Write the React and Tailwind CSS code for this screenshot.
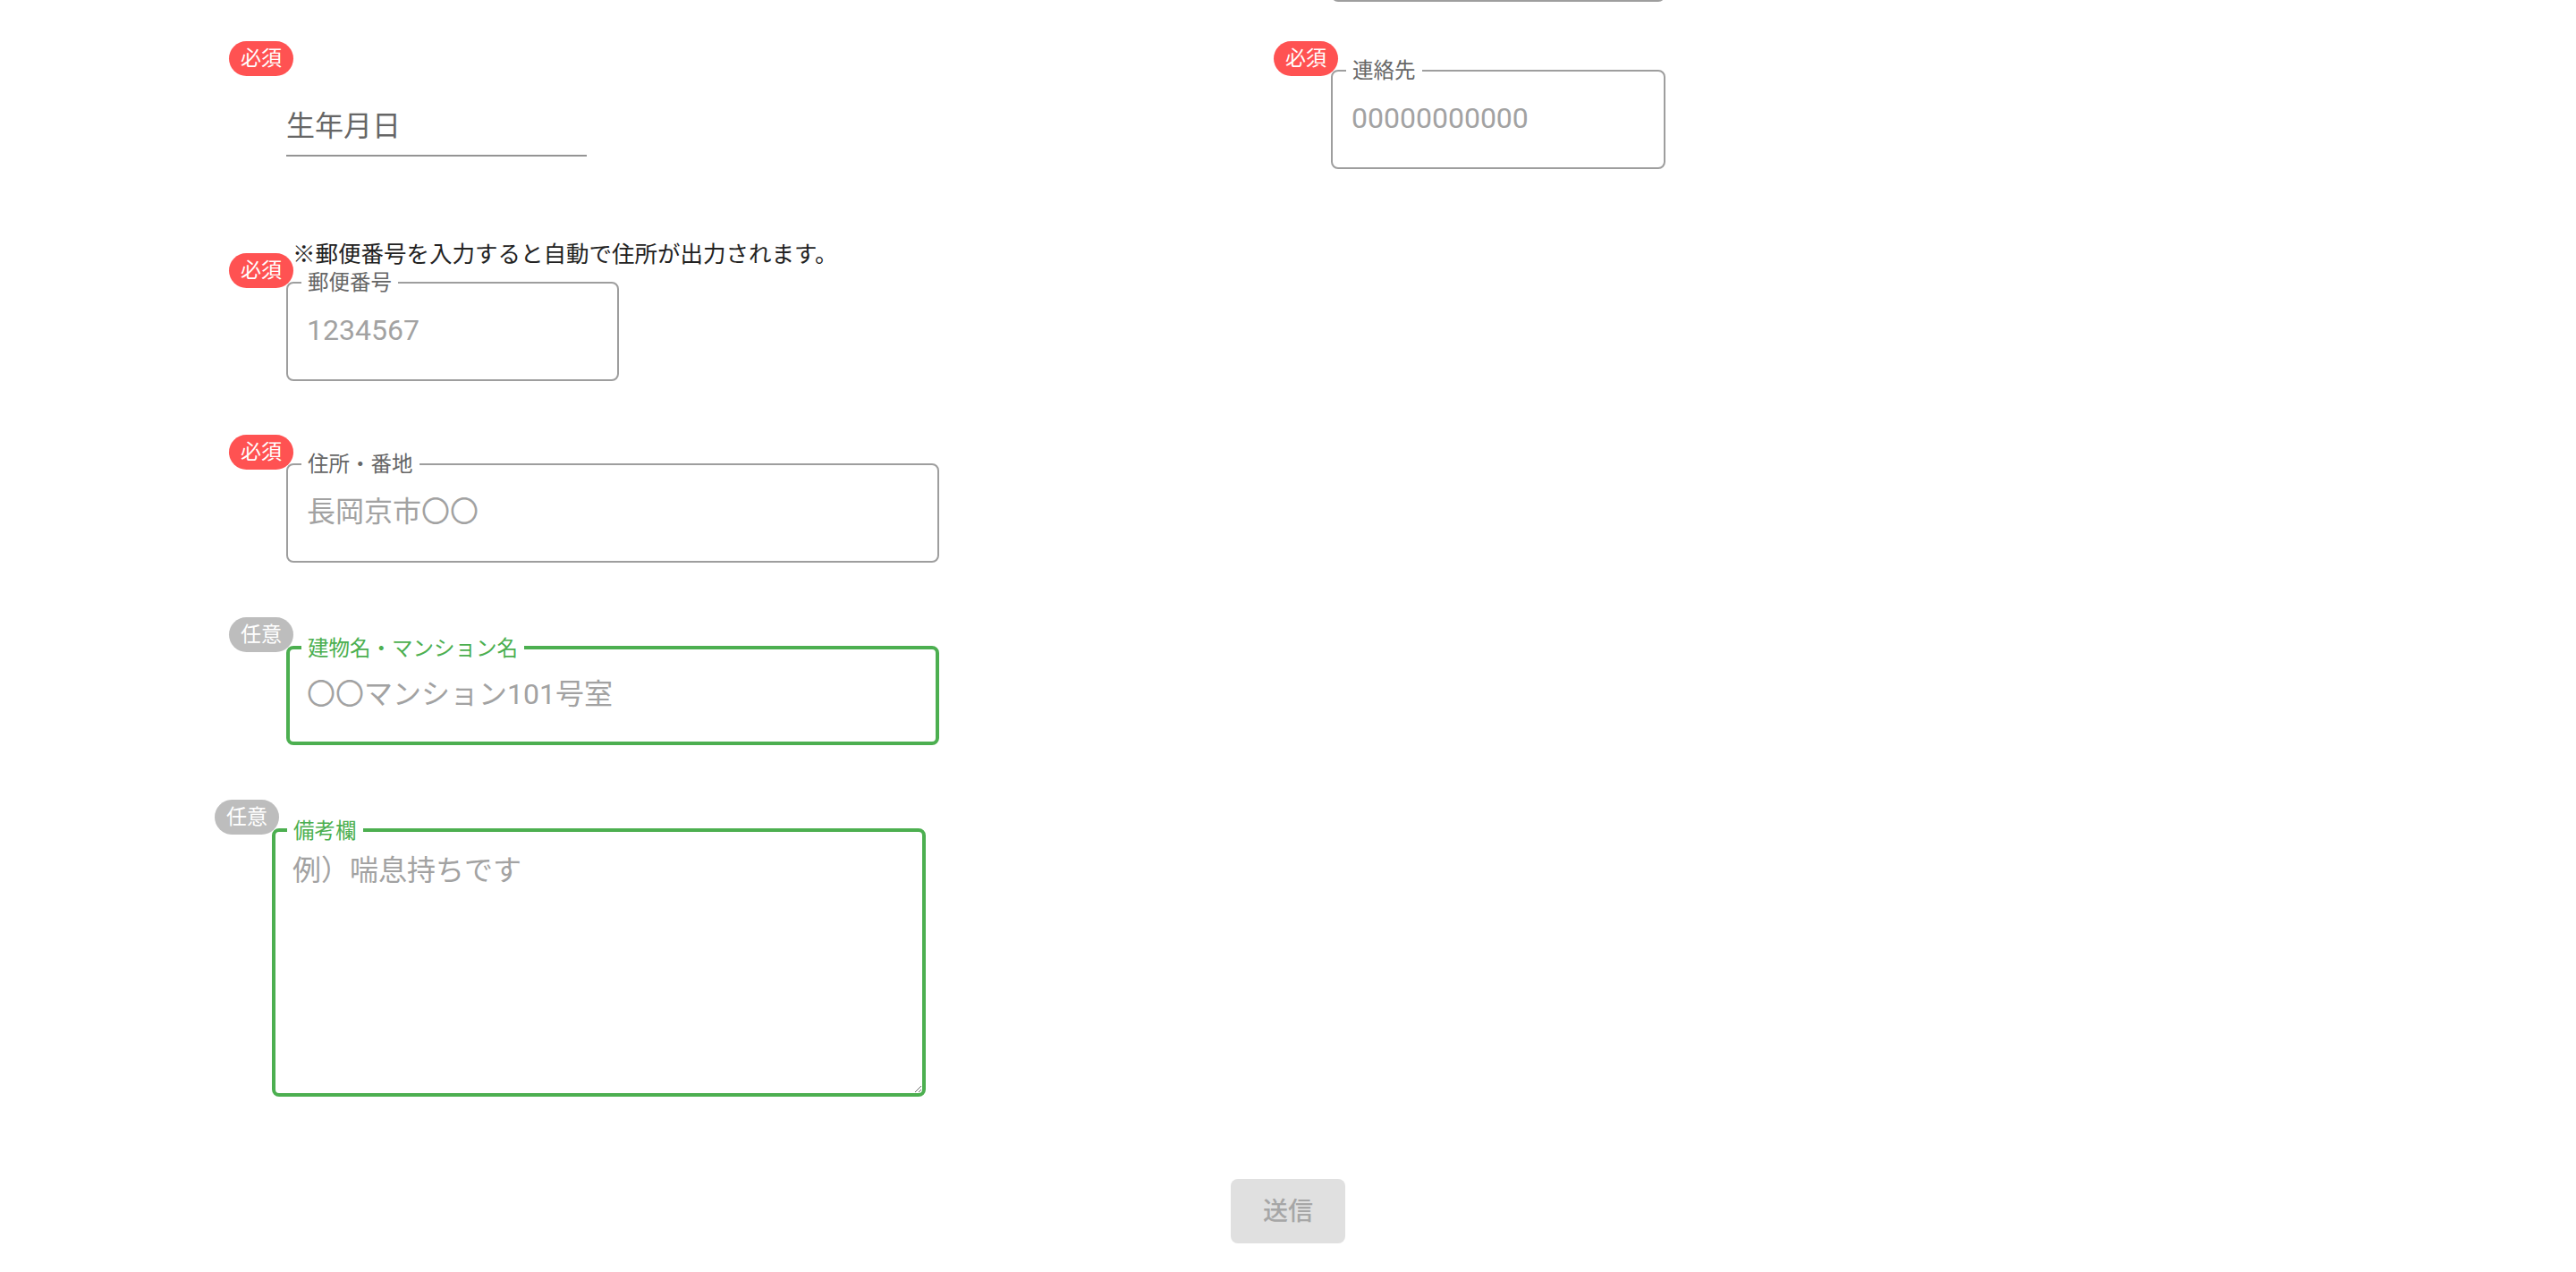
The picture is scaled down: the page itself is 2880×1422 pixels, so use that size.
import React from 'react';

function Badge({ required }) {
  return (
    <span
      className={`absolute -left-[64px] -top-[32px] flex h-[39px] w-[72px] items-center justify-center rounded-full text-[23px] leading-none text-white ${
        required ? 'bg-[#ff5252]' : 'bg-[#bdbdbd]'
      }`}
    >
      {required ? '必須' : '任意'}
    </span>
  );
}

function OutlinedField({ label, placeholder, width, green, required }) {
  return (
    <div className={`relative ${width}`}>
      <Badge required={required} />
      <input
        placeholder={placeholder}
        className={`block h-[111px] w-full rounded-[8px] bg-white pb-[3px] text-[32px] leading-[46px] text-[#212121] outline-none placeholder:text-[#a2a2a2] ${
          green ? 'border-4 border-[#4caf50] pl-[19px]' : 'border-2 border-[#9e9e9e] pl-[21px]'
        }`}
      />
      <span
        className={`absolute left-[17px] bg-white px-[7px] text-[23.5px] leading-[24px] ${
          green ? '-top-[9px] text-[#4caf50]' : '-top-[11px] text-[#666666]'
        }`}
      >
        {label}
      </span>
    </div>
  );
}

function DateField() {
  return (
    <div className="relative h-[97px] w-[336px] border-b-2 border-[#949494] pt-[40px]">
      <Badge required />
      <label className="block text-[32px] leading-[46px] text-[#666666]">生年月日</label>
    </div>
  );
}

function NoteField() {
  return (
    <div className="relative w-[731px]">
      <Badge required={false} />
      <textarea
        placeholder="例）喘息持ちです"
        className="block h-[300px] w-full rounded-[8px] border-4 border-[#4caf50] bg-white pl-[19px] pr-[19px] pt-[20px] text-[32px] leading-[46px] text-[#212121] outline-none placeholder:text-[#a2a2a2]"
      />
      <span className="absolute -top-[9px] left-[17px] bg-white px-[7px] text-[23.5px] leading-[24px] text-[#4caf50]">
        備考欄
      </span>
    </div>
  );
}

export default function App() {
  return (
    <div className="min-h-screen overflow-hidden bg-white font-[Roboto,'Noto_Sans_CJK_JP',sans-serif]">
      <div className="-mt-[109px]">
        <section className="pl-[320px]">
          <div className="grid grid-cols-[1168px_374px] gap-y-[76px]">
            <div />
            {/* previous row, scrolled out of view */}
            <div className="h-[111px] w-[374px] rounded-[8px] border-2 border-[#9e9e9e]" />
            <DateField />
            <OutlinedField label="連絡先" placeholder="00000000000" width="w-[374px]" required />
          </div>

          <div className="mt-[83px] flex flex-col">
            <p className="ml-[7px] text-[25.5px] leading-[25px] text-[#212121]">
              ※郵便番号を入力すると自動で住所が出力されます。
            </p>
            <div className="mt-[18px]">
              <OutlinedField label="郵便番号" placeholder="1234567" width="w-[372px]" required />
            </div>
            <div className="mt-[92px]">
              <OutlinedField label="住所・番地" placeholder="長岡京市〇〇" width="w-[730px]" required />
            </div>
            <div className="mt-[93px]">
              <OutlinedField label="建物名・マンション名" placeholder="〇〇マンション101号室" width="w-[730px]" green />
            </div>
            <div className="-ml-[16px] mt-[93px]">
              <NoteField />
            </div>
          </div>
        </section>

        <div className="mt-[92px] flex justify-center pb-[32px]">
          <button
            disabled
            className="h-[72px] min-w-[128px] rounded-[8px] bg-[#e0e0e0] px-[32px] text-[28px] font-medium leading-[49px] text-[#a6a6a6]"
          >
            送信
          </button>
        </div>
      </div>
    </div>
  );
}
